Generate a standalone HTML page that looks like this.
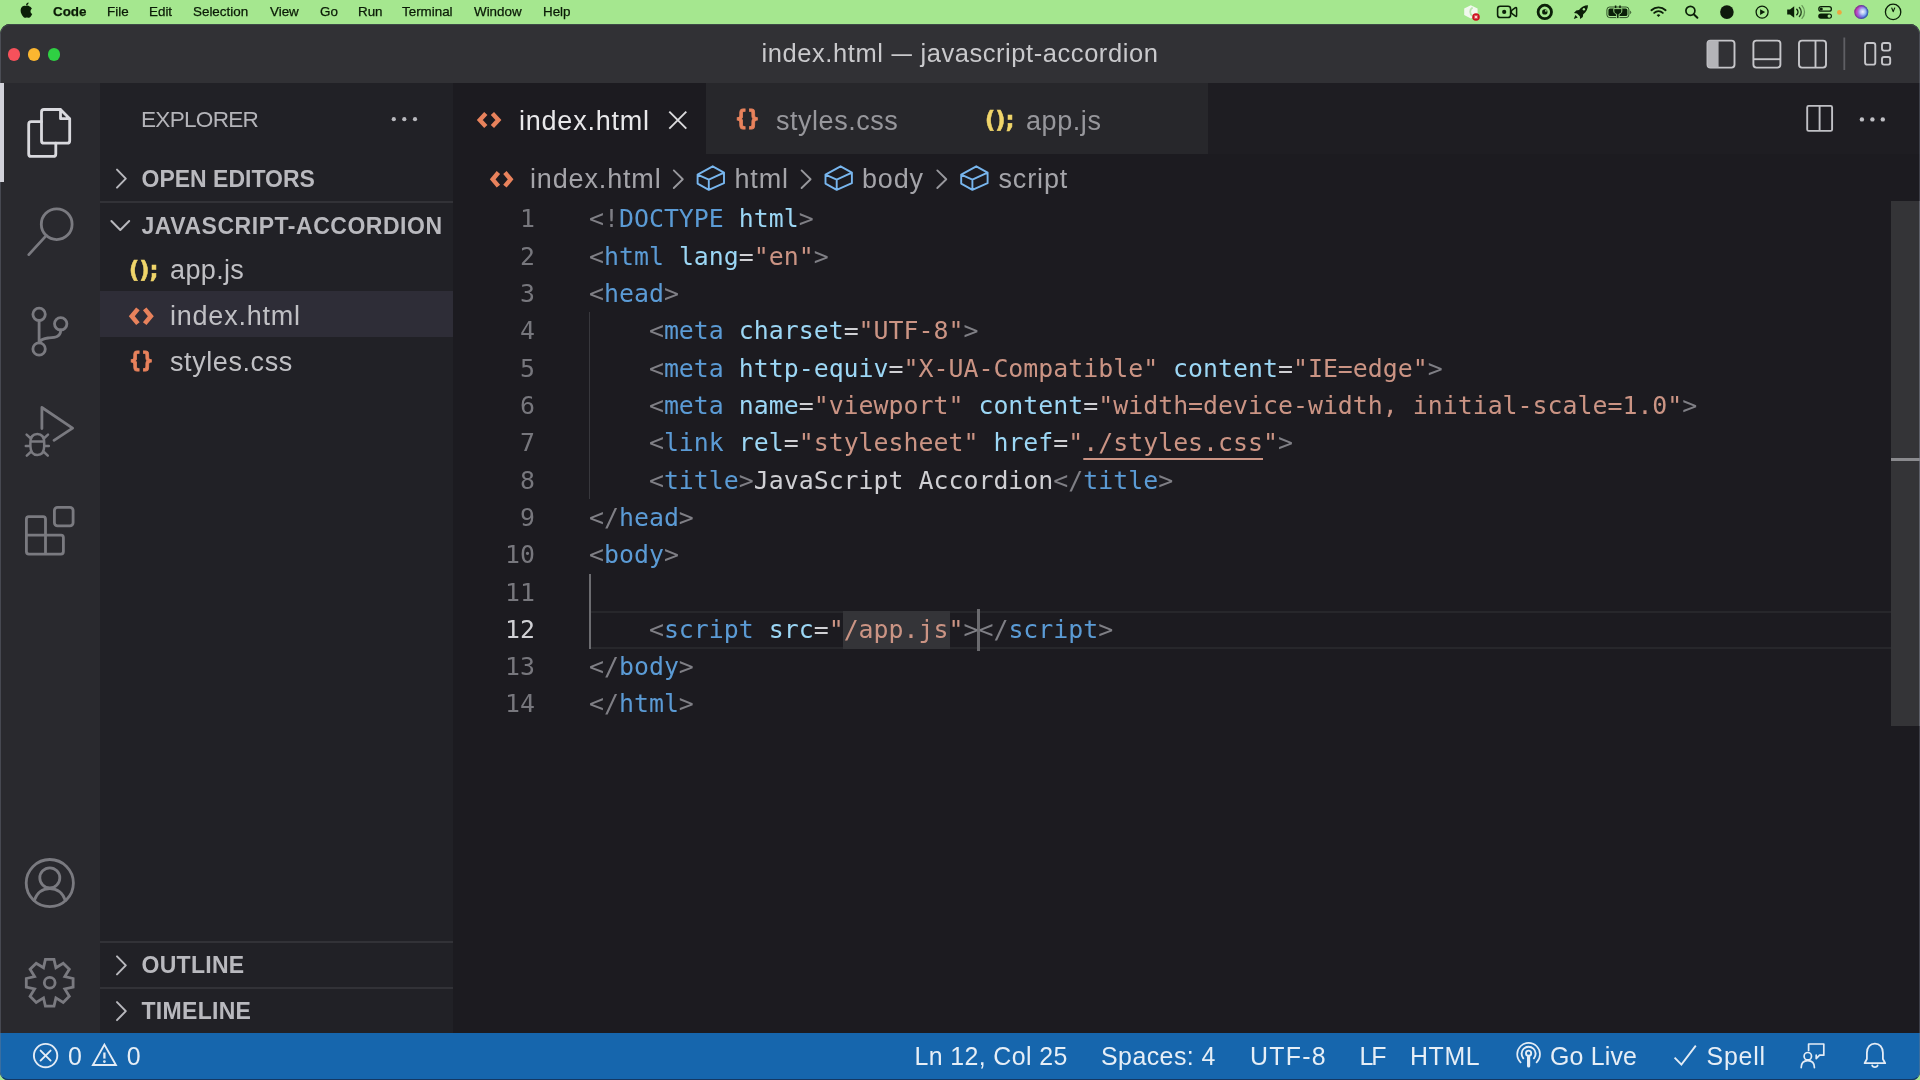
<!DOCTYPE html>
<html lang="en">
<head>
<meta charset="UTF-8">
<title>index.html — javascript-accordion</title>
<style>
*{box-sizing:border-box;margin:0;padding:0}
html,body{width:1920px;height:1080px;overflow:hidden;background:#a5e78f;font-family:"Liberation Sans",sans-serif;}
.abs{position:absolute}
#win,#menubar{will-change:transform}
#menubar{position:absolute;left:0;top:0;width:1920px;height:24px;background:#a5e78f;color:#0a1a06;font-size:13.4px;}
#menubar span{position:absolute;top:0;line-height:23px;white-space:nowrap;-webkit-text-stroke:.25px #0a1a06}
#win{position:absolute;left:0;top:24px;width:1920px;height:1055.5px;background:#1c1b20;border-radius:10px 10px 8px 8px;overflow:hidden}
#frame{position:absolute;left:0;top:24px;width:1920px;height:1055.5px;border-radius:10px 10px 8px 8px;border:1px solid rgba(120,125,140,.38);border-top:1.3px solid #3d4a46;border-bottom:1.5px solid rgba(20,25,50,.6);pointer-events:none}
#titlebar{position:absolute;left:0;top:0;width:1920px;height:59px;background:#313135}
#title{position:absolute;left:0;width:1920px;top:0;text-align:center;line-height:59.4px;font-size:25.5px;letter-spacing:.56px;color:#c9c9cc;white-space:nowrap}
.tl{position:absolute;top:24.4px;width:12.4px;height:12.4px;border-radius:50%}
#activity{position:absolute;left:0;top:59px;width:100px;height:951px;background:#29292e}
#sidebar{position:absolute;left:100px;top:59px;width:353px;height:951px;background:#212126}
#editor{position:absolute;left:453px;top:59px;width:1467px;height:951px;background:#1c1b20}
#status{position:absolute;left:0;top:1009px;width:1920px;height:47px;background:#1666ad;color:#e6eef6;font-size:24.9px}
#status span{position:absolute;top:0px;line-height:46px;white-space:nowrap}
.sbh{position:absolute;left:0;width:353px;height:46px;font-weight:bold;font-size:23px;color:#b9b9be;line-height:46px;white-space:nowrap}
.sbh b{position:absolute;left:41.5px;top:1px}
.row{position:absolute;left:0;width:353px;height:46px;font-size:27px;color:#c0c0c4;line-height:46px;white-space:nowrap}
.row i{position:absolute;left:70px;top:0;font-style:normal}
.tab{position:absolute;top:0;height:71px;font-size:27px;line-height:73px;white-space:nowrap;background:#27272b;color:#97979c}
.tab i{position:absolute;top:0;font-style:normal}
.code{position:absolute;left:136px;white-space:pre;font-family:"DejaVu Sans Mono","Liberation Mono",monospace;font-size:24.88px;line-height:37.32px;height:37.32px;color:#d4d4d4;letter-spacing:0}
.ln.cur{color:#d0d0d4}
.ln{position:absolute;left:0;width:82px;text-align:right;font-family:"DejaVu Sans Mono","Liberation Mono",monospace;font-size:24.88px;line-height:37.32px;height:37.32px;color:#77777d}
.p{color:#7f7f85}.t{color:#5b9bd5}.a{color:#9cd7f5}.s{color:#cb9484}.x{color:#d0d0d4}
.u{text-decoration:underline;text-decoration-thickness:2px;text-underline-offset:7px}
.bc{position:absolute;top:73px;letter-spacing:.85px;height:46px;line-height:46px;font-size:27px;color:#a4a4a9;white-space:nowrap}
.ic{position:absolute;font-family:"DejaVu Sans","Liberation Sans",sans-serif;font-weight:bold;font-size:22px;line-height:30px;white-space:nowrap;font-style:normal}
.js{color:#f0d56a;font-size:22.4px;-webkit-text-stroke:.5px #f0d56a}.css{color:#e8825c;font-size:21.5px;-webkit-text-stroke:.9px #e8825c;transform:scaleX(.8);transform-origin:0 50%;margin-top:-1.5px}
svg{position:absolute;overflow:visible}
</style>
</head>
<body>
<div id="menubar">
<span style="left:53px;font-weight:bold">Code</span>
<span style="left:107px">File</span>
<span style="left:149px">Edit</span>
<span style="left:193px">Selection</span>
<span style="left:270px">View</span>
<span style="left:320px">Go</span>
<span style="left:358px">Run</span>
<span style="left:402px">Terminal</span>
<span style="left:474px">Window</span>
<span style="left:543px">Help</span>
</div>
<div id="win">
<div id="titlebar">
<div class="tl" style="left:7.7px;background:#f6515b"></div>
<div class="tl" style="left:27.8px;background:#fbb630"></div>
<div class="tl" style="left:48px;background:#2fd043"></div>
<div id="title">index.html <span style="display:inline-block;transform:scaleX(.8);margin:0 -2.2px">—</span> javascript-accordion</div>
</div>
<div id="activity"></div>
<div id="sidebar">
<div class="abs" style="left:41px;top:0;height:73px;line-height:73px;font-size:22.6px;letter-spacing:-.74px;color:#b4b4b9">EXPLORER</div>
<div class="sbh" style="top:71.6px"><b>OPEN EDITORS</b></div>
<div class="sbh" style="top:118.4px;border-top:2px solid #323237"><b style="letter-spacing:.53px;top:-.8px">JAVASCRIPT-ACCORDION</b></div>
<div class="row" style="top:162.8px"><span class="ic js" style="left:29px;top:9px">();</span><i style="letter-spacing:.36px;top:1.5px">app.js</i></div>
<div class="row" style="top:208.4px;background:#2e2d37"><i style="letter-spacing:.77px;top:2px">index.html</i></div>
<div class="row" style="top:254px"><span class="ic css" style="left:29px;top:9px">{}</span><i style="letter-spacing:.58px;top:1.5px">styles.css</i></div>
<div class="sbh" style="top:858px;border-top:2px solid #323237"><b style="letter-spacing:.28px;top:-.7px">OUTLINE</b></div>
<div class="sbh" style="top:903.8px;border-top:2px solid #323237"><b style="letter-spacing:.3px;top:-.6px">TIMELINE</b></div>
</div>
<div id="editor">
<div class="abs" style="left:0;top:0;width:1467px;height:71px;background:#1e1d22"></div>
<div class="tab" style="left:0;width:253px;background:#1c1b20;color:#e8e8ea"><i style="left:66px;top:1.5px;letter-spacing:.77px">index.html</i></div>
<div class="tab" style="left:253px;width:250px"><span class="ic css" style="left:29px;top:21px">{}</span><i style="left:70px;top:1.5px;letter-spacing:.53px">styles.css</i></div>
<div class="tab" style="left:503px;width:251.5px"><span class="ic js" style="left:29px;top:22px">();</span><i style="left:70px;top:1.5px;letter-spacing:.58px">app.js</i></div>
<div class="bc" style="left:77px">index.html</div>
<div class="bc" style="left:281.5px">html</div>
<div class="bc" style="left:409px">body</div>
<div class="bc" style="left:545.5px">script</div>
<div id="deco">
<div class="abs" style="left:136px;top:229.3px;width:1px;height:186.6px;background:#38383d"></div>
<div class="abs" style="left:136px;top:490.5px;width:2px;height:75px;background:#6c6c70"></div>
<div class="abs" style="left:138px;top:528.4px;width:1300px;height:37.6px;border-top:2px solid #27272b;border-bottom:2px solid #27272b"></div>
<div class="abs" style="left:389.5px;top:528px;width:107.5px;height:37.5px;background:#343438"></div>
<div class="abs" style="left:524.4px;top:526px;width:2.6px;height:42px;background:#6a6a6e"></div>
<div class="abs" style="left:1438px;top:118px;width:28px;height:524.5px;background:#343437"></div>
<div class="abs" style="left:1466px;top:118px;width:1px;height:524.5px;background:#505054"></div>
<div class="abs" style="left:1438px;top:375px;width:29px;height:3px;background:#8a8a8e"></div>
</div>
<div id="lines">
<div class="ln" style="top:117.30px">1</div><div class="code" style="top:117.30px"><span class="p">&lt;!</span><span class="t">DOCTYPE</span> <span class="a">html</span><span class="p">&gt;</span></div>
<div class="ln" style="top:154.62px">2</div><div class="code" style="top:154.62px"><span class="p">&lt;</span><span class="t">html</span> <span class="a">lang</span><span class="x">=</span><span class="s">"en"</span><span class="p">&gt;</span></div>
<div class="ln" style="top:191.94px">3</div><div class="code" style="top:191.94px"><span class="p">&lt;</span><span class="t">head</span><span class="p">&gt;</span></div>
<div class="ln" style="top:229.26px">4</div><div class="code" style="top:229.26px">    <span class="p">&lt;</span><span class="t">meta</span> <span class="a">charset</span><span class="x">=</span><span class="s">"UTF-8"</span><span class="p">&gt;</span></div>
<div class="ln" style="top:266.58px">5</div><div class="code" style="top:266.58px">    <span class="p">&lt;</span><span class="t">meta</span> <span class="a">http-equiv</span><span class="x">=</span><span class="s">"X-UA-Compatible"</span> <span class="a">content</span><span class="x">=</span><span class="s">"IE=edge"</span><span class="p">&gt;</span></div>
<div class="ln" style="top:303.90px">6</div><div class="code" style="top:303.90px">    <span class="p">&lt;</span><span class="t">meta</span> <span class="a">name</span><span class="x">=</span><span class="s">"viewport"</span> <span class="a">content</span><span class="x">=</span><span class="s">"width=device-width, initial-scale=1.0"</span><span class="p">&gt;</span></div>
<div class="ln" style="top:341.22px">7</div><div class="code" style="top:341.22px">    <span class="p">&lt;</span><span class="t">link</span> <span class="a">rel</span><span class="x">=</span><span class="s">"stylesheet"</span> <span class="a">href</span><span class="x">=</span><span class="s">"</span><span class="s u">./styles.css</span><span class="s">"</span><span class="p">&gt;</span></div>
<div class="ln" style="top:378.54px">8</div><div class="code" style="top:378.54px">    <span class="p">&lt;</span><span class="t">title</span><span class="p">&gt;</span><span class="x">JavaScript Accordion</span><span class="p">&lt;/</span><span class="t">title</span><span class="p">&gt;</span></div>
<div class="ln" style="top:415.86px">9</div><div class="code" style="top:415.86px"><span class="p">&lt;/</span><span class="t">head</span><span class="p">&gt;</span></div>
<div class="ln" style="top:453.18px">10</div><div class="code" style="top:453.18px"><span class="p">&lt;</span><span class="t">body</span><span class="p">&gt;</span></div>
<div class="ln" style="top:490.50px">11</div><div class="code" style="top:490.50px"></div>
<div class="ln cur" style="top:527.82px">12</div><div class="code" style="top:527.82px">    <span class="p">&lt;</span><span class="t">script</span> <span class="a">src</span><span class="x">=</span><span class="s">"/app.js"</span><span class="p">&gt;</span><span class="p">&lt;/</span><span class="t">script</span><span class="p">&gt;</span></div>
<div class="ln" style="top:565.14px">13</div><div class="code" style="top:565.14px"><span class="p">&lt;/</span><span class="t">body</span><span class="p">&gt;</span></div>
<div class="ln" style="top:602.46px">14</div><div class="code" style="top:602.46px"><span class="p">&lt;/</span><span class="t">html</span><span class="p">&gt;</span></div>
</div><!--endlines-->
</div>
<div id="status">
<span style="left:68px">0</span>
<span style="left:126.8px">0</span>
<span style="left:914.5px;letter-spacing:.39px">Ln 12, Col 25</span>
<span style="left:1101px;letter-spacing:.47px">Spaces: 4</span>
<span style="left:1250px;letter-spacing:1.3px">UTF-8</span>
<span style="left:1359.5px;letter-spacing:-2px">LF</span>
<span style="left:1410px;letter-spacing:.6px">HTML</span>
<span style="left:1550px;letter-spacing:.18px">Go Live</span>
<span style="left:1706.5px;letter-spacing:.78px">Spell</span>
</div>
</div>
<div id="frame"></div>
<svg id="ov" width="1920" height="1080" viewBox="0 0 1920 1080" style="left:0;top:0;pointer-events:none">
<rect x="0" y="83" width="4" height="99" fill="#d2d2da"/>
<g fill="none" stroke="#d9d9de" stroke-width="2.8" stroke-linejoin="round" stroke-linecap="round">
<path d="M44,109.5 H60.5 L69.7,118.7 V140.7 Q69.7,143.2 67.2,143.2 H44 Q41.5,143.2 41.5,140.7 V112 Q41.5,109.5 44,109.5 Z M60.5,109.5 V118.7 H69.7"/>
<path d="M41.5,121.7 H31.2 Q28.7,121.7 28.7,124.2 V153.9 Q28.7,156.4 31.2,156.4 H53.3 Q55.8,156.4 55.8,153.9 V143.2"/>
</g>
<g fill="none" stroke="#7a7a80" stroke-width="2.8" stroke-linejoin="round" stroke-linecap="round">
<circle cx="56.7" cy="224.2" r="15.4"/><path d="M46.2,235.6 L28.8,254.6"/>
<circle cx="39.1" cy="314.3" r="6.2"/><circle cx="60.7" cy="323.8" r="6.2"/><circle cx="39.1" cy="349" r="6.2"/>
<path d="M39.1,320.5 V342.8 M60.7,330 C60.7,337.5 54,337.5 48,338 C44,338.5 40.5,340 39.1,342.6"/>
<path d="M41.9,428.5 V407.5 L72.6,428.2 L54,440.3"/>
<path d="M30.4,443 C30.4,437 33,434 37.3,434 C41.6,434 44.2,437 44.2,443 V446 C44.2,452 41.6,455 37.3,455 C33,455 30.4,452 30.4,446 Z M30.4,441.5 H44.2 M30.4,446 H25.8 M44.2,446 H48.8 M30.8,438.5 L26.6,434.6 M43.8,438.5 L48,434.6 M31.2,451.5 L26.8,455.6 M43.4,451.5 L47.8,455.6" stroke-width="2.5"/>
<path d="M28.9,516.6 H43 Q45.5,516.6 45.5,519 V535.2 H61 Q63.4,535.2 63.4,537.7 V551.6 Q63.4,554.1 61,554.1 H28.9 Q26.4,554.1 26.4,551.6 V519 Q26.4,516.6 28.9,516.6 Z M26.4,535.2 H45.5 V554.1"/>
<rect x="54.4" y="507.4" width="18.7" height="18.5" rx="3.2"/>
<circle cx="49.8" cy="883.1" r="23.6"/><circle cx="49.8" cy="877.9" r="10"/><path d="M34.2,900.6 C37,892.5 43,888.6 49.8,888.6 C56.6,888.6 62.6,892.5 65.4,900.6"/>
<path d="M43.5,967.7 L45.4,959.4 L54.0,959.4 L55.9,967.7 L63.2,963.2 L69.3,969.3 L64.8,976.6 L73.1,978.5 L73.1,987.1 L64.8,989.0 L69.3,996.3 L63.2,1002.4 L55.9,997.9 L54.0,1006.2 L45.4,1006.2 L43.5,997.9 L36.2,1002.4 L30.1,996.3 L34.6,989.0 L26.3,987.1 L26.3,978.5 L34.6,976.6 L30.1,969.3 L36.2,963.2Z" stroke-linejoin="miter"/><circle cx="49.7" cy="982.8" r="5.4"/>
</g>
<g fill="none" stroke="#c6c6ca" stroke-width="1.9">
<rect x="1707.5" y="40.6" width="27" height="27" rx="3"/><path d="M1707.5,43.6 Q1707.5,40.6 1710.5,40.6 H1718.6 V67.6 H1710.5 Q1707.5,67.6 1707.5,64.6 Z" fill="#b4b4b8" stroke="none"/>
<rect x="1753.4" y="40.6" width="27" height="27" rx="3"/><path d="M1753.4,59.2 H1780.4"/>
<rect x="1799" y="40.6" width="27" height="27" rx="3"/><path d="M1815.5,40.6 V67.6"/>
<rect x="1865.1" y="43" width="10.2" height="21.6" rx="2.2"/><rect x="1882" y="43" width="8.2" height="7.6" rx="2"/><rect x="1882" y="57" width="8.2" height="7.6" rx="2"/>
</g>
<rect x="1843.4" y="37.5" width="1.8" height="32.5" fill="#5f5f64"/>
<g fill="none" stroke="#c0c0c5" stroke-width="1.9"><rect x="1807.2" y="105.9" width="24.9" height="25" rx="1.5"/><path d="M1819.6,105.9 V130.9"/></g>
<g fill="#c0c0c5"><circle cx="1861.9" cy="119.4" r="2.2"/><circle cx="1872.4" cy="119.4" r="2.2"/><circle cx="1882.8" cy="119.4" r="2.2"/></g>
<g fill="#b8b8bd"><circle cx="393.8" cy="119.2" r="2.1"/><circle cx="404.3" cy="119.2" r="2.1"/><circle cx="415" cy="119.2" r="2.1"/></g>
<g fill="none" stroke="#b8b8bd" stroke-width="2" stroke-linecap="round" stroke-linejoin="round">
<path d="M117,169.6 L125.8,178.6 L117,187.6"/>
<path d="M111.4,221 L120.3,230 L129.2,221"/>
<path d="M117,956.4 L125.8,965.4 L117,974.4"/>
<path d="M117,1002.1 L125.8,1011.1 L117,1020.1"/>
</g>
<g fill="none" stroke="#98989d" stroke-width="1.9" stroke-linecap="round" stroke-linejoin="round">
<path d="M673.8,170.4 L682.8,179.2 L673.8,188"/>
<path d="M801.6,170.4 L810.6,179.2 L801.6,188"/>
<path d="M937.3,170.4 L946.3,179.2 L937.3,188"/>
</g>
<g fill="none" stroke="#78b6ee" stroke-width="1.9" stroke-linejoin="round">
<path d="M712.7,166.3 L724.0,172.6 L724.0,183.2 L708.8,189.8 L697.6,183.6 L697.6,174.6 Z M697.6,174.6 L708.8,179.7 L724.0,172.6 M708.8,179.7 L708.8,189.8"/>
<path d="M840.6,166.3 L851.9,172.6 L851.9,183.2 L836.7,189.8 L825.5,183.6 L825.5,174.6 Z M825.5,174.6 L836.7,179.7 L851.9,172.6 M836.7,179.7 L836.7,189.8"/>
<path d="M976.3,166.3 L987.6,172.6 L987.6,183.2 L972.4,189.8 L961.2,183.6 L961.2,174.6 Z M961.2,174.6 L972.4,179.7 L987.6,172.6 M972.4,179.7 L972.4,189.8"/>
</g>
<path d="M485.8,113.6 L479.8,120.1 L485.8,126.6 M492.4,113.6 L498.4,120.1 L492.4,126.6" fill="none" stroke="#e8825c" stroke-width="4.4" stroke-linejoin="miter" stroke-linecap="butt"/>
<path d="M498.4,172.5 L492.7,179.3 L498.4,186.2 M504.9,172.5 L510.6,179.3 L504.9,186.2" fill="none" stroke="#e8825c" stroke-width="4.4" stroke-linejoin="miter" stroke-linecap="butt"/>
<path d="M137.9,308.9 L131.8,316.2 L137.9,323.6 M144.7,308.9 L150.8,316.2 L144.7,323.6" fill="none" stroke="#e8825c" stroke-width="4.6" stroke-linejoin="miter" stroke-linecap="butt"/>
<path d="M669.3,111.6 L686.3,128.6 M686.3,111.6 L669.3,128.6" stroke="#dcdcde" stroke-width="1.9" fill="none"/>
<g fill="none" stroke="#e4ecf5" stroke-width="1.9" stroke-linecap="round" stroke-linejoin="round">
<circle cx="45.6" cy="1055.6" r="11.7"/><path d="M40.6,1050.6 L50.6,1060.6 M50.6,1050.6 L40.6,1060.6"/>
<path d="M104.4,1044.6 L115.9,1065 H92.9 Z" stroke-linejoin="miter"/><path d="M104.4,1052.5 V1058.6" stroke-width="2.3" stroke-linecap="butt"/><circle cx="104.4" cy="1061.6" r="0.6" stroke-width="1.6"/>
<circle cx="1528.6" cy="1053.2" r="2.6"/><path d="M1528.6,1056.5 V1066" stroke-width="3.2"/>
<path d="M1523.3,1058.3 A7,7 0 1 1 1533.9,1058.3"/><path d="M1520.6,1062.4 A11.4,11.4 0 1 1 1536.6,1062.4" stroke-width="1.7"/>
<path d="M1674.6,1057.6 L1681.4,1064.6 L1695.8,1045.6" stroke-linejoin="miter" stroke-linecap="butt"/>
<path d="M1808.6,1050.5 V1044 H1823.8 V1055.2 H1819.6 L1816.2,1058.6 V1055.2" stroke-width="1.7"/><circle cx="1807.8" cy="1056.2" r="3.7" stroke-width="1.7"/><path d="M1801.2,1067.6 C1801.2,1062.6 1804,1060.6 1807.8,1060.6 C1811.6,1060.6 1814.4,1062.6 1814.4,1067.6" stroke-width="1.7"/>
<path d="M1864.6,1063.2 H1885.2 L1882.9,1059 V1052.8 C1882.9,1047.4 1879.6,1043.6 1874.9,1043.6 C1870.2,1043.6 1866.9,1047.4 1866.9,1052.8 V1059 Z" stroke-width="1.8"/><path d="M1872.2,1065.4 C1872.6,1067.6 1877.2,1067.6 1877.6,1065.4" stroke-width="1.8"/>
</g>
<path d="M29.6,6.6 C28.4,5.2 26.6,5.6 25.9,6.0 C25.2,5.6 23.6,5.3 22.3,6.4 C20.2,8.1 20.2,11.6 21.6,14.3 C22.4,15.9 23.6,17.8 25.0,17.8 C25.7,17.8 26.0,17.4 26.9,17.4 C27.8,17.4 28.0,17.8 28.8,17.8 C30.3,17.8 31.5,15.6 32.2,14.0 C30.2,13.0 29.9,9.8 31.9,8.7 C31.4,7.7 30.5,6.9 29.6,6.6 Z M26.0,5.3 C26.0,3.8 27.2,2.6 28.6,2.5 C28.7,4.0 27.5,5.3 26.0,5.3 Z" fill="#0b1f08"/>
<path d="M1470.8,5.2 L1477.6,8.6 V15 L1470.8,18.4 L1464.2,15 V8.6 Z" fill="#f1f8ee"/><path d="M1472.6,7.4 C1469.4,9.4 1469.4,14 1472.6,16" stroke="#b9e6ad" stroke-width="1.8" fill="none"/><circle cx="1476" cy="17" r="3.8" fill="#cc1220"/><path d="M1474.6,15.6 L1477.4,18.4 M1477.4,15.6 L1474.6,18.4" stroke="#ffd0d0" stroke-width="1.3"/>
<rect x="1497.6" y="6.3" width="13" height="11.2" rx="2.6" fill="none" stroke="#0b1f08" stroke-width="1.6"/><circle cx="1504.2" cy="11.9" r="2.1" fill="#0b1f08"/><path d="M1511.4,10.6 L1515.4,7.6 Q1516.6,7 1516.6,8.4 V15.4 Q1516.6,16.8 1515.4,16.2 L1511.4,13.2 Z" fill="none" stroke="#0b1f08" stroke-width="1.5" stroke-linejoin="round"/>
<circle cx="1544.8" cy="11.9" r="6.7" fill="none" stroke="#0b1f08" stroke-width="2.8"/><circle cx="1544.8" cy="11.9" r="2.7" fill="#0b1f08"/><circle cx="1545.9" cy="10.8" r="0.9" fill="#a5e78f"/>
<path d="M1588,5.2 C1584.4,5.2 1581.2,7 1579,10 L1576.2,10.4 L1574,13 L1577,13.4 L1579.8,16.2 L1580.2,19 L1582.8,17 L1583.2,14.2 C1586.2,12 1588,8.8 1588,5.2 Z M1575.4,15 L1573.8,18.9 L1577.8,17.4 Z" fill="#0b1f08"/><circle cx="1583.9" cy="9.3" r="1.2" fill="#a5e78f"/>
<rect x="1606.9" y="7" width="22" height="10.6" rx="2.8" fill="none" stroke="#0b1f08" stroke-width="1" opacity=".75"/><rect x="1608.4" y="8.5" width="19" height="7.6" rx="1.6" fill="#0b1f08"/><path d="M1629.9,10.4 Q1631.2,11 1631.2,12.3 Q1631.2,13.6 1629.9,14.2 Z" fill="#0b1f08" opacity=".6"/>
<path d="M1615.6,5.6 V9 M1620,5.6 V9" stroke="#0b1f08" stroke-width="1.5"/><path d="M1613.8,8.6 H1621.8 V11 C1621.8,13 1620,14 1619,14.2 V18.6 H1616.6 V14.2 C1615.6,14 1613.8,13 1613.8,11 Z" fill="#0b1f08" stroke="#a5e78f" stroke-width="0.9"/>
<g fill="none" stroke="#0b1f08" stroke-width="1.9" stroke-linecap="round"><path d="M1651.4,10.2 A10.4,10.4 0 0 1 1665.6,10.2"/><path d="M1654.2,12.9 A6.4,6.4 0 0 1 1662.8,12.9"/></g><path d="M1656.7,15.2 A2.6,2.6 0 0 1 1660.3,15.2 L1658.5,17.1 Z" fill="#0b1f08"/>
<circle cx="1690.4" cy="10.8" r="4.5" fill="none" stroke="#0b1f08" stroke-width="1.7"/><path d="M1693.7,14.2 L1697.4,17.8" stroke="#0b1f08" stroke-width="2" stroke-linecap="round"/>
<circle cx="1726.9" cy="12.1" r="6.8" fill="#0f1a0d"/>
<circle cx="1762.1" cy="12.1" r="6" fill="none" stroke="#0b1f08" stroke-width="1.3"/><path d="M1760.1,9.2 L1765.2,12.1 L1760.1,15 Z" fill="#0b1f08"/>
<path d="M1787.2,9.6 H1790 L1794.2,6.2 V17.8 L1790,14.4 H1787.2 Z" fill="#0b1f08"/><g fill="none" stroke-linecap="round"><path d="M1796.8,9.2 A4,4 0 0 1 1796.8,14.8" stroke="#0b1f08" stroke-width="1.4"/><path d="M1799.4,7.4 A6.6,6.6 0 0 1 1799.4,16.6" stroke="#0b1f08" stroke-width="1.4" opacity=".8"/><path d="M1802,5.6 A9.4,9.4 0 0 1 1802,18.4" stroke="#0b1f08" stroke-width="1.3" opacity=".4"/></g>
<rect x="1818.8" y="6.6" width="12.6" height="4.6" rx="2.3" fill="none" stroke="#0b1f08" stroke-width="1.3"/><circle cx="1821.3" cy="8.9" r="1.5" fill="#0b1f08"/><rect x="1818.2" y="13.4" width="13.8" height="5.4" rx="2.7" fill="#0b1f08"/><circle cx="1829.2" cy="16.1" r="1.7" fill="#a5e78f"/>
<circle cx="1839.4" cy="12.4" r="2.4" fill="#eea63e"/>
<defs><linearGradient id="sg" x1="0" y1="0.3" x2="1" y2="0.7"><stop offset="0" stop-color="#d83aa8"/><stop offset=".4" stop-color="#a44fd0"/><stop offset="1" stop-color="#2a86ea"/></linearGradient><radialGradient id="sh" cx=".6" cy=".48" r=".42"><stop offset="0" stop-color="#ffffff" stop-opacity=".95"/><stop offset=".45" stop-color="#c8ecff" stop-opacity=".7"/><stop offset="1" stop-color="#7ac0ff" stop-opacity="0"/></radialGradient><radialGradient id="sd" cx=".5" cy=".5" r=".5"><stop offset=".7" stop-color="#20205a" stop-opacity="0"/><stop offset="1" stop-color="#20205a" stop-opacity=".55"/></radialGradient></defs>
<circle cx="1861.3" cy="12.1" r="7" fill="url(#sg)"/><circle cx="1861.3" cy="12.1" r="7" fill="url(#sh)"/><circle cx="1861.3" cy="12.1" r="7" fill="url(#sd)"/>
<circle cx="1893.1" cy="11.9" r="7.7" fill="none" stroke="#0b1f08" stroke-width="1.3"/><path d="M1891.6,7.6 L1893.2,11.6 L1894.8,7.6" fill="none" stroke="#0b1f08" stroke-width="1.2" stroke-linejoin="round"/>
</svg><!--endov-->
</body>
</html>
